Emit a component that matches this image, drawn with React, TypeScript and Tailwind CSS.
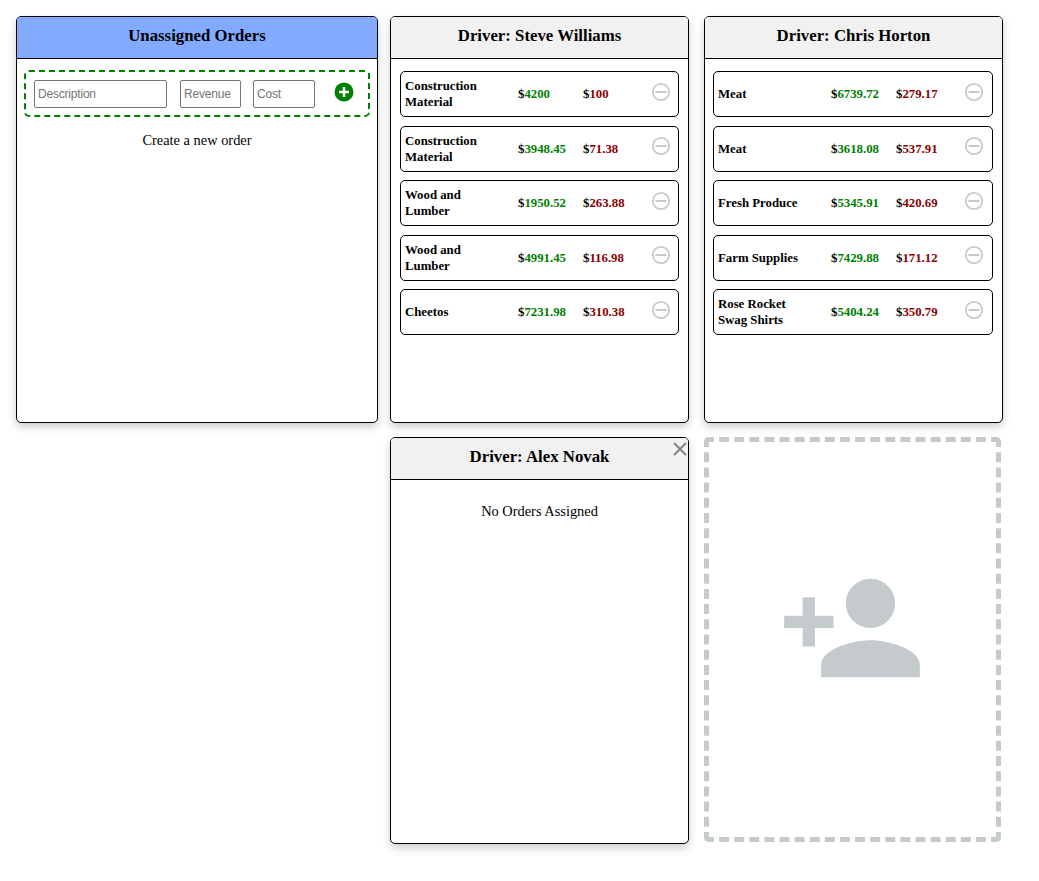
type Order = { name: string; revenue: string; cost: string };

const steve: Order[] = [
  { name: "Construction Material", revenue: "4200", cost: "100" },
  { name: "Construction Material", revenue: "3948.45", cost: "71.38" },
  { name: "Wood and Lumber", revenue: "1950.52", cost: "263.88" },
  { name: "Wood and Lumber", revenue: "4991.45", cost: "116.98" },
  { name: "Cheetos", revenue: "7231.98", cost: "310.38" },
];

const chris: Order[] = [
  { name: "Meat", revenue: "6739.72", cost: "279.17" },
  { name: "Meat", revenue: "3618.08", cost: "537.91" },
  { name: "Fresh Produce", revenue: "5345.91", cost: "420.69" },
  { name: "Farm Supplies", revenue: "7429.88", cost: "171.12" },
  { name: "Rose Rocket Swag Shirts", revenue: "5404.24", cost: "350.79" },
];

function MinusIcon() {
  return (
    <svg viewBox="0 0 20 20" className="w-[20px] h-[20px] -mt-[4.2px] shrink-0">
      <circle cx="10" cy="10" r="8.2" fill="none" stroke="#c5cacd" strokeWidth="1.8" />
      <rect x="4.5" y="9" width="11" height="2" fill="#c5cacd" />
    </svg>
  );
}

function OrderRow({ order }: { order: Order }) {
  return (
    <div className="flex items-center h-[46px] border border-black rounded-[5px] pl-1 text-[12.8px] leading-4 font-bold">
      <div className="w-[113px] shrink-0 pr-[20px]">{order.name}</div>
      <div className="w-[65px] shrink-0">
        $<span className="text-[#008000]">{order.revenue}</span>
      </div>
      <div className="w-[68px] shrink-0">
        $<span className="text-[#8b0000]">{order.cost}</span>
      </div>
      <MinusIcon />
    </div>
  );
}

function Card({
  title,
  headerClass,
  width,
  closable,
  children,
}: {
  title: string;
  headerClass: string;
  width: string;
  closable?: boolean;
  children: React.ReactNode;
}) {
  return (
    <div
      className={`relative ${width} h-[407px] shrink-0 border border-black rounded-[5px] bg-white shadow-[0_4px_8px_rgba(0,0,0,0.2)] overflow-hidden`}
    >
      <div
        className={`h-[42px] flex items-center justify-center pb-[4px] border-b border-black text-[16.8px] font-bold ${headerClass}`}
      >
        {title}
      </div>
      {closable && (
        <svg viewBox="0 0 16 16" className="absolute top-[3px] right-0 w-[16px] h-[16px]">
          <path d="M2 2 L14 14 M14 2 L2 14" stroke="#808080" strokeWidth="1.8" fill="none" />
        </svg>
      )}
      {children}
    </div>
  );
}

function DriverOrders({ orders, inset }: { orders: Order[]; inset: string }) {
  return (
    <div className={`flex flex-col gap-[8.5px] pt-[12px] ${inset}`}>
      {orders.map((order, i) => (
        <OrderRow key={i} order={order} />
      ))}
    </div>
  );
}

export default function App() {
  return (
    <div className="min-h-[881px] bg-white pt-4 pl-4 text-[14.4px] text-black font-['Liberation_Serif',serif]">
      <div className="flex">
        <Card title="Unassigned Orders" headerClass="bg-[#82aaff]" width="w-[362px]">
          <div className="mx-[7px] mt-[11px] h-[47px] flex items-center border-2 border-dashed border-[#008000] rounded-[5px] pl-[8px]">
            <input
              placeholder="Description"
              className="w-[133px] h-[28px] border border-[#767676] rounded-[2px] px-[3px] text-[12px] tracking-[-0.2px] font-['Liberation_Sans',sans-serif] placeholder:text-[#757575]"
            />
            <input
              placeholder="Revenue"
              className="ml-[13px] w-[61px] h-[28px] border border-[#767676] rounded-[2px] px-[3px] text-[12px] tracking-[-0.2px] font-['Liberation_Sans',sans-serif] placeholder:text-[#757575]"
            />
            <input
              placeholder="Cost"
              className="ml-[12px] w-[62px] h-[28px] border border-[#767676] rounded-[2px] px-[3px] text-[12px] tracking-[-0.2px] font-['Liberation_Sans',sans-serif] placeholder:text-[#757575]"
            />
            <svg viewBox="0 0 20 20" className="ml-[19px] -mt-[4px] w-[20px] h-[20px]">
              <circle cx="10" cy="10" r="9.5" fill="#008000" />
              <path d="M10 5 V15 M5 10 H15" stroke="#fff" strokeWidth="2.6" />
            </svg>
          </div>
          <p className="mt-[15px] text-center leading-4">Create a new order</p>
        </Card>
        <div className="ml-3">
          <Card title="Driver: Steve Williams" headerClass="bg-[#f1f1f1]" width="w-[299px]">
            <DriverOrders orders={steve} inset="px-[9px]" />
          </Card>
        </div>
        <div className="ml-[15px]">
          <Card title="Driver: Chris Horton" headerClass="bg-[#f1f1f1]" width="w-[299px]">
            <DriverOrders orders={chris} inset="pl-[8px] pr-[9px]" />
          </Card>
        </div>
      </div>
      <div className="flex mt-[14px] ml-[374px]">
        <Card title="Driver: Alex Novak" headerClass="bg-[#f1f1f1]" width="w-[299px]" closable>
          <p className="mt-[23px] text-center leading-4">No Orders Assigned</p>
        </Card>
        <div className="ml-[15px] w-[297px] h-[405px] shrink-0 border-[5px] border-dashed border-[#c5cacd] rounded-[5px] flex items-center justify-center pb-[24px] pr-[2px]">
          <svg viewBox="0 0 24 24" className="w-[148px] h-[148px]" fill="#c5cacd">
            <path d="M15 12c2.21 0 4-1.79 4-4s-1.79-4-4-4-4 1.79-4 4 1.79 4 4 4zm-9-2V7H4v3H1v2h3v3h2v-3h3v-2H6zm9 4c-2.67 0-8 1.34-8 4v2h16v-2c0-2.66-5.33-4-8-4z" />
          </svg>
        </div>
      </div>
    </div>
  );
}
